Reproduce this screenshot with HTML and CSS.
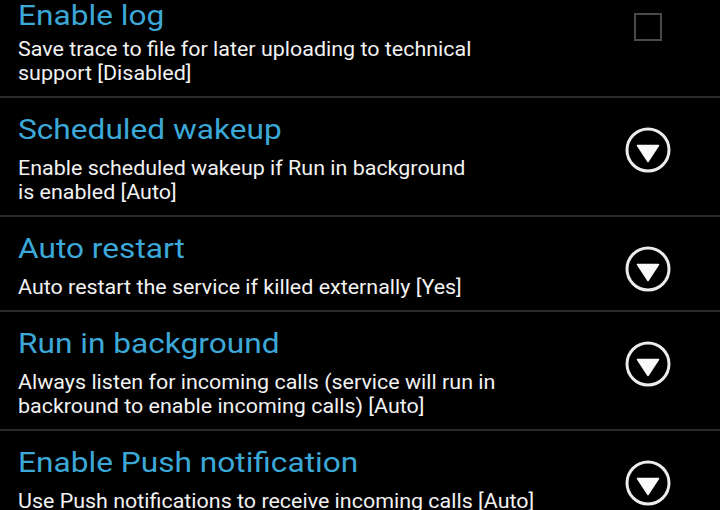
FILE: index.html
```html
<!DOCTYPE html>
<html>
<head>
<meta charset="utf-8">
<link rel="stylesheet" href="styles.css">
</head>
<body>
<div class="list">
  <div class="row">
    <div class="text">
      <div class="title title-first">Enable log</div>
      <div class="summary">Save trace to file for later uploading to technical<br>support [Disabled]</div>
    </div>
    <div class="widget"><span class="checkbox"></span></div>
  </div>
  <div class="row">
    <div class="text">
      <div class="title">Scheduled wakeup</div>
      <div class="summary">Enable scheduled wakeup if Run in background<br>is enabled [Auto]</div>
    </div>
    <div class="widget"><svg class="drop" viewBox="0 0 46 46"><circle cx="23" cy="23" r="21" fill="none" stroke="#ececec" stroke-width="3"/><path d="M12.5 18.5 H33.5 L23 34.5 Z" fill="#fafafa" stroke="#fafafa" stroke-width="1.5" stroke-linejoin="round"/></svg></div>
  </div>
  <div class="row">
    <div class="text">
      <div class="title">Auto restart</div>
      <div class="summary">Auto restart the service if killed externally [Yes]</div>
    </div>
    <div class="widget"><svg class="drop" viewBox="0 0 46 46"><circle cx="23" cy="23" r="21" fill="none" stroke="#ececec" stroke-width="3"/><path d="M12.5 18.5 H33.5 L23 34.5 Z" fill="#fafafa" stroke="#fafafa" stroke-width="1.5" stroke-linejoin="round"/></svg></div>
  </div>
  <div class="row">
    <div class="text">
      <div class="title">Run in background</div>
      <div class="summary">Always listen for incoming calls (service will run in<br>backround to enable incoming calls) [Auto]</div>
    </div>
    <div class="widget"><svg class="drop" viewBox="0 0 46 46"><circle cx="23" cy="23" r="21" fill="none" stroke="#ececec" stroke-width="3"/><path d="M12.5 18.5 H33.5 L23 34.5 Z" fill="#fafafa" stroke="#fafafa" stroke-width="1.5" stroke-linejoin="round"/></svg></div>
  </div>
  <div class="row">
    <div class="text">
      <div class="title">Enable Push notification</div>
      <div class="summary">Use Push notifications to receive incoming calls [Auto]</div>
    </div>
    <div class="widget"><svg class="drop" viewBox="0 0 46 46"><circle cx="23" cy="23" r="21" fill="none" stroke="#ececec" stroke-width="3"/><path d="M12.5 18.5 H33.5 L23 34.5 Z" fill="#fafafa" stroke="#fafafa" stroke-width="1.5" stroke-linejoin="round"/></svg></div>
  </div>
</div>
</body>
</html>
```
FILE: styles.css
```css
html, body {
  margin: 0;
  padding: 0;
  background: #000;
  overflow: hidden;
}
body {
  width: 720px;
  height: 510px;
  font-family: Roboto, "Noto Sans", sans-serif;
}
.list {
  margin-top: -20px;
  display: flex;
  flex-direction: column;
}
.row {
  display: flex;
  align-items: flex-start;
  padding: 16px 0 10px 18px;
  border-bottom: 2px solid #2a2a2a;
}
.text {
  flex: 1;
  min-width: 0;
}
.title {
  font-size: 28px;
  line-height: 32px;
  color: #3ca8d8;
  margin-bottom: 11px;
  white-space: nowrap;
  transform: scaleX(1.13);
  transform-origin: left center;
}
.title-first {
  margin-top: 4px;
  margin-bottom: 6px;
}
.summary {
  font-size: 19.5px;
  line-height: 24px;
  color: #f2f2f2;
  white-space: nowrap;
  transform: scaleX(1.1);
  transform-origin: left center;
}
.widget {
  flex: none;
  width: 90px;
  margin-right: 27px;
  display: flex;
  justify-content: center;
  padding-top: 13px;
}
.checkbox {
  display: block;
  width: 24px;
  height: 24px;
  border: 2px solid #4a4a4a;
  margin-top: 4px;
}
.drop {
  width: 46px;
  height: 46px;
  display: block;
}
```
